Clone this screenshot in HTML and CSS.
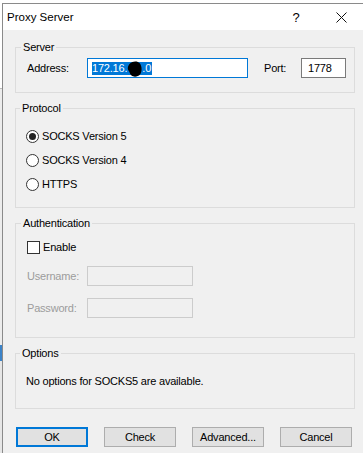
FILE: index.html
```html
<!DOCTYPE html>
<html>
<head>
<meta charset="utf-8">
<link rel="stylesheet" href="styles.css">
</head>
<body>
<div class="screen">
  <div class="behind">
    <div class="behind-top"></div>
    <div class="behind-mid"></div>
    <div class="behind-mark"></div>
    <div class="behind-low"></div>
  </div>
  <div class="dialog">
    <div class="titlebar">
      <span class="title">Proxy Server</span>
      <span class="tb-btn help">?</span>
      <span class="tb-btn close"><svg width="11" height="11" viewBox="0 0 11 11"><path d="M0.5 0.5L10.5 10.5M10.5 0.5L0.5 10.5" stroke="#111" stroke-width="1" fill="none"/></svg></span>
    </div>
    <div class="content">
      <fieldset class="group server">
        <legend>Server</legend>
        <div class="row">
          <span class="lbl addr-lbl">Address:</span>
          <div class="field addr"><span class="sel">172.16.<span class="redact"><svg width="15" height="16" viewBox="0 0 15 16"><path d="M3 2.5 C5.5 0 10.5 -0.5 13 2.5 C15 5.5 15.2 10.5 13 13.5 C11 16 6.5 16.3 4.5 14.5 C2.5 13 3 11 1.5 9.5 C0 7.5 1 4.5 3 2.5 Z" fill="#000"/></svg></span>.0</span></div>
          <span class="lbl port-lbl">Port:</span>
          <div class="field port">1778</div>
        </div>
      </fieldset>

      <fieldset class="group protocol">
        <legend>Protocol</legend>
        <div class="opt">
          <svg class="radio" width="13" height="13" viewBox="0 0 13 13"><circle cx="6.5" cy="6.5" r="6" fill="#fff" stroke="#333"/><circle cx="6.5" cy="6.5" r="3.5" fill="#222"/></svg>
          <span>SOCKS Version 5</span>
        </div>
        <div class="opt">
          <svg class="radio" width="13" height="13" viewBox="0 0 13 13"><circle cx="6.5" cy="6.5" r="6" fill="#fff" stroke="#333"/></svg>
          <span>SOCKS Version 4</span>
        </div>
        <div class="opt">
          <svg class="radio" width="13" height="13" viewBox="0 0 13 13"><circle cx="6.5" cy="6.5" r="6" fill="#fff" stroke="#333"/></svg>
          <span>HTTPS</span>
        </div>
      </fieldset>

      <fieldset class="group auth">
        <legend>Authentication</legend>
        <div class="opt check-row">
          <span class="checkbox"></span>
          <span>Enable</span>
        </div>
        <div class="row cred user">
          <span class="lbl dis addr-lbl">Username:</span>
          <div class="field disabled"></div>
        </div>
        <div class="row cred pass">
          <span class="lbl dis addr-lbl">Password:</span>
          <div class="field disabled"></div>
        </div>
      </fieldset>

      <fieldset class="group options">
        <legend>Options</legend>
        <div class="note">No options for SOCKS5 are available.</div>
      </fieldset>

      <div class="buttons">
        <button class="btn default">OK</button>
        <button class="btn">Check</button>
        <button class="btn">Advanced...</button>
        <button class="btn">Cancel</button>
      </div>
    </div>
  </div>
</div>
</body>
</html>
```
FILE: styles.css
```css
html, body {
  margin: 0;
  padding: 0;
}
body {
  width: 363px;
  height: 453px;
  overflow: hidden;
  background: #fff;
  font-family: "Liberation Sans", Arial, sans-serif;
  font-size: 11px;
  letter-spacing: -0.2px;
  color: #000;
}
.screen {
  display: flex;
  height: 453px;
}
.behind {
  width: 3px;
  display: flex;
  flex-direction: column;
}
.behind-top {
  height: 88px;
  background: #fff;
  border-bottom: 1px solid #bbb;
}
.behind-mid {
  height: 256px;
  background: #ececec;
}
.behind-mark {
  height: 16px;
  background: #3b83c8;
}
.behind-low {
  flex: 1;
  background: #e6e6e6;
}
.dialog {
  flex: 1;
  margin-top: 3px;
  border-top: 1px solid #8a8a8a;
  border-left: 1px solid #8a8a8a;
  background: #f0f0f0;
  display: flex;
  flex-direction: column;
}
.titlebar {
  height: 26px;
  background: #fff;
  display: flex;
  align-items: center;
}
.title {
  flex: 1;
  padding-left: 4px;
  font-size: 11.5px;
  letter-spacing: 0;
}
.tb-btn {
  width: 46px;
  height: 26px;
  display: flex;
  align-items: center;
  justify-content: center;
}
.help {
  font-size: 13px;
  letter-spacing: 0;
}
.close {
  width: 44px;
}
.content {
  padding: 11px 8px 0 12px;
  display: flex;
  flex-direction: column;
  gap: 9px;
}
.group {
  margin: 0;
  min-width: 0;
  border: 1px solid #dcdcdc;
  padding: 0 8px 0 11px;
}
.group legend {
  padding: 0 2px;
  margin-left: -6px;
  line-height: 13px;
  font-size: 11px;
}
.row {
  display: flex;
  align-items: center;
  height: 20px;
}
.server {
  padding-top: 4px;
  padding-bottom: 14px;
}
.lbl {
  white-space: nowrap;
}
.addr-lbl {
  width: 60px;
}
.port-lbl {
  width: 37px;
  margin-left: 16px;
}
.field {
  box-sizing: border-box;
  height: 20px;
  border: 1px solid #7a7a7a;
  background: #fff;
  padding: 0 4px;
  display: flex;
  align-items: center;
  white-space: nowrap;
}
.addr {
  width: 161px;
  border-color: #0078d7;
}
.port {
  width: 45px;
  padding-left: 6px;
}
.sel {
  background: #0078d7;
  color: #fff;
  line-height: 13px;
  padding-right: 1px;
  display: inline-flex;
  align-items: center;
}
.redact {
  display: inline-block;
  width: 15px;
  height: 13px;
  position: relative;
}
.redact svg {
  position: absolute;
  left: 0;
  top: -1px;
}
.protocol {
  padding-top: 9px;
  padding-bottom: 11px;
  padding-left: 10px;
}
.opt {
  height: 24px;
  display: flex;
  align-items: center;
  gap: 3px;
}
.radio {
  display: block;
}
.auth {
  padding-top: 5px;
  padding-bottom: 19px;
}
.checkbox {
  box-sizing: border-box;
  width: 13px;
  height: 13px;
  border: 1px solid #333;
  background: #fff;
}
.check-row {
  gap: 3px;
}
.user {
  margin-top: 7px;
}
.pass {
  margin-top: 12px;
}
.dis {
  color: #9c9c9c;
}
.disabled {
  width: 106px;
  border-color: #cccccc;
  background: #f0f0f0;
}
.options {
  padding-top: 15px;
  padding-bottom: 20px;
  padding-left: 10px;
}
.note {
  line-height: 13px;
}
.buttons {
  margin-top: 9px;
  padding-left: 1px;
  display: flex;
  gap: 16px;
}
.btn {
  box-sizing: border-box;
  width: 72px;
  height: 20px;
  margin: 0;
  padding: 0;
  background: #e1e1e1;
  border: 1px solid #adadad;
  border-radius: 0;
  font-family: "Liberation Sans", Arial, sans-serif;
  font-size: 11px;
  letter-spacing: -0.2px;
  color: #000;
}
.btn.default {
  border: 2px solid #0078d7;
}
```
